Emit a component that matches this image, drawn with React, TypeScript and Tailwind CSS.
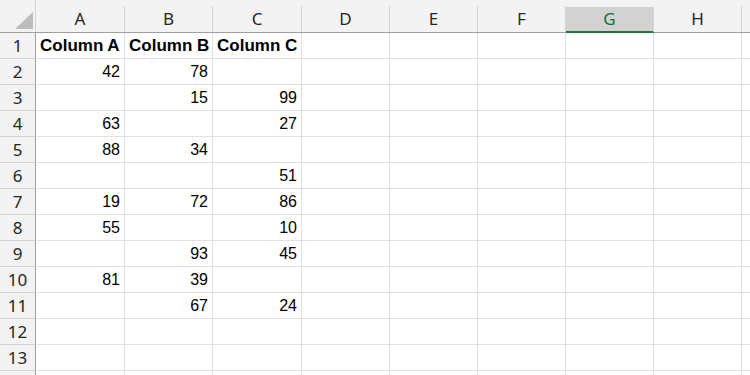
import React from 'react';

type Cell = string | number | null;

const columns = [
  { label: 'A', w: 'w-[89px]' },
  { label: 'B', w: 'w-[88px]' },
  { label: 'C', w: 'w-[89px]' },
  { label: 'D', w: 'w-[88px]' },
  { label: 'E', w: 'w-[88px]' },
  { label: 'F', w: 'w-[88px]' },
  { label: 'G', w: 'w-[88px]' },
  { label: 'H', w: 'w-[88px]' },
  { label: '', w: 'w-[88px]' }, // partly visible column past the edge
];

const rows: Cell[][] = [
  ['Column A', 'Column B', 'Column C'],
  [42, 78, null],
  [null, 15, 99],
  [63, null, 27],
  [88, 34, null],
  [null, null, 51],
  [19, 72, 86],
  [55, null, 10],
  [null, 93, 45],
  [81, 39, null],
  [null, 67, 24],
  [],
  [],
];

const headerFont = { fontFamily: '"Noto Sans", "Open Sans", sans-serif' };
const cellFont = { fontFamily: '"Liberation Sans", Arial, sans-serif' };

export default function App() {
  return (
    <div className="w-[750px] h-[375px] overflow-hidden bg-white select-none">
      {/* column header strip */}
      <div className="flex h-[33px] bg-[#f3f3f3] border-b border-[#a0a0a0]">
        <div className="w-[36px] shrink-0 flex items-end justify-end pr-[2px] pb-[3px] border-r border-[#d4d4d4]">
          <svg width="18" height="17" viewBox="0 0 18 17">
            <polygon points="18,0 18,17 0,17" fill="#bdbdbd" />
          </svg>
        </div>
        {columns.map((c, j) => {
          const selected = c.label === 'G';
          return (
            <div
              key={j}
              style={headerFont}
              className={`${c.w} shrink-0 self-end h-[26px] flex items-center justify-center text-[17px] border-r border-[#d4d4d4] ${
                selected
                  ? 'bg-[#d2d2d2] text-[#1e6b43] border-b-2 border-b-[#217346] -mb-px'
                  : 'text-[#262626]'
              }`}
            >
              {c.label}
            </div>
          );
        })}
      </div>

      {/* grid rows */}
      {rows.map((row, i) => (
        <div key={i} className="flex h-[26px]">
          <div
            style={headerFont}
            className="w-[36px] shrink-0 flex items-center justify-center text-[17px] text-[#262626] bg-[#f3f3f3] border-r border-b border-r-[#a0a0a0] border-b-[#d4d4d4]"
          >
            {i + 1}
          </div>
          {columns.map((c, j) => {
            const v = row[j];
            const isText = typeof v === 'string';
            return (
              <div
                key={j}
                style={cellFont}
                className={`${c.w} shrink-0 flex items-center text-black border-r border-b border-[#e1e1e1] ${
                  isText ? 'justify-start pl-[4px] font-bold text-[17px]' : 'justify-end pr-[4px] text-[16px]'
                }`}
              >
                {v ?? ''}
              </div>
            );
          })}
        </div>
      ))}

      {/* sliver of the next row at the bottom edge */}
      <div className="flex h-[26px]">
        <div className="w-[36px] shrink-0 bg-[#f3f3f3] border-r border-[#a0a0a0]" />
        {columns.map((c, j) => (
          <div key={j} className={`${c.w} shrink-0 border-r border-[#e1e1e1]`} />
        ))}
      </div>
    </div>
  );
}
